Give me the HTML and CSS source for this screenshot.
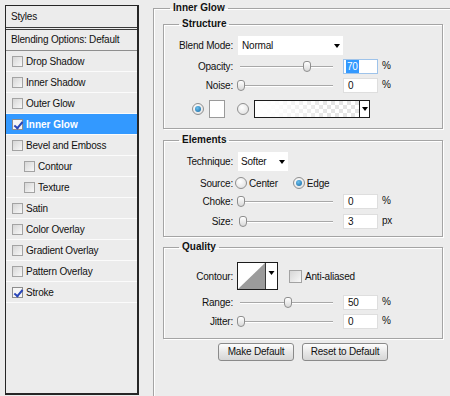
FILE: index.html
```html
<!DOCTYPE html>
<html lang="en">
<head>
<meta charset="utf-8">
<title>Layer Style - Inner Glow</title>
<link rel="stylesheet" href="styles.css">
</head>
<body>
<div class="app">
  <aside class="styles-panel">
    <div class="panel-head">Styles</div>
    <div class="blend-row">Blending Options: Default</div>
    <ul class="style-list">
      <li class="style-item"><span class="cb"></span>Drop Shadow</li>
      <li class="style-item"><span class="cb"></span>Inner Shadow</li>
      <li class="style-item"><span class="cb"></span>Outer Glow</li>
      <li class="style-item active"><span class="cb checked"></span>Inner Glow</li>
      <li class="style-item"><span class="cb"></span>Bevel and Emboss</li>
      <li class="style-item sub"><span class="cb"></span>Contour</li>
      <li class="style-item sub"><span class="cb"></span>Texture</li>
      <li class="style-item"><span class="cb"></span>Satin</li>
      <li class="style-item"><span class="cb"></span>Color Overlay</li>
      <li class="style-item"><span class="cb"></span>Gradient Overlay</li>
      <li class="style-item"><span class="cb"></span>Pattern Overlay</li>
      <li class="style-item"><span class="cb checked"></span>Stroke</li>
    </ul>
  </aside>

  <fieldset class="outer">
    <legend class="outer-legend">Inner Glow</legend>

    <fieldset class="group structure">
      <legend class="group-legend">Structure</legend>
      <div class="row row-select">
        <span class="label">Blend Mode:</span>
        <div class="select select-blend"><span>Normal</span><i class="arrow"></i></div>
      </div>
      <div class="row row-slider row-first">
        <span class="label">Opacity:</span>
        <div class="slider"><div class="range"><span class="thumb" style="left:70%"></span></div></div>
        <div class="num focused"><span class="sel">70</span></div>
        <span class="unit">%</span>
      </div>
      <div class="row row-slider">
        <span class="label">Noise:</span>
        <div class="slider"><div class="range"><span class="thumb" style="left:0%"></span></div></div>
        <div class="num">0</div>
        <span class="unit">%</span>
      </div>
      <div class="row row-color">
        <span class="radio on"></span>
        <span class="swatch"></span>
        <span class="radio radio-2"></span>
        <div class="gradient"><span class="grad-fill"></span><span class="grad-drop"><i class="arrow"></i></span></div>
      </div>
    </fieldset>

    <fieldset class="group elements">
      <legend class="group-legend">Elements</legend>
      <div class="row row-select">
        <span class="label">Technique:</span>
        <div class="select select-tech"><span>Softer</span><i class="arrow"></i></div>
      </div>
      <div class="row row-source">
        <span class="label">Source:</span>
        <span class="radio radio-src"></span><span class="opt">Center</span>
        <span class="radio radio-src radio-edge on"></span><span class="opt">Edge</span>
      </div>
      <div class="row row-slider row-choke">
        <span class="label">Choke:</span>
        <div class="slider"><div class="range"><span class="thumb" style="left:0%"></span></div></div>
        <div class="num">0</div>
        <span class="unit">%</span>
      </div>
      <div class="row row-slider row-size">
        <span class="label">Size:</span>
        <div class="slider"><div class="range"><span class="thumb" style="left:2%"></span></div></div>
        <div class="num">3</div>
        <span class="unit">px</span>
      </div>
    </fieldset>

    <fieldset class="group quality">
      <legend class="group-legend">Quality</legend>
      <div class="row row-contour">
        <span class="label">Contour:</span>
        <svg class="contour" width="41" height="28" viewBox="0 0 41 28" aria-hidden="true">
          <rect x="0.5" y="0.5" width="40" height="27" fill="#fff" stroke="#1c1c1c"/>
          <polygon points="1,27 28,1 28,27" fill="#9b9b9b"/>
          <line x1="28.5" y1="1" x2="28.5" y2="27" stroke="#3a3a3a"/>
          <polygon points="31.5,9 37.5,9 34.5,13" fill="#000"/>
        </svg>
        <span class="cb cb-aa"></span><span class="opt">Anti-aliased</span>
      </div>
      <div class="row row-slider row-range">
        <span class="label">Range:</span>
        <div class="slider"><div class="range"><span class="thumb" style="left:50%"></span></div></div>
        <div class="num">50</div>
        <span class="unit">%</span>
      </div>
      <div class="row row-slider">
        <span class="label">Jitter:</span>
        <div class="slider"><div class="range"><span class="thumb" style="left:0%"></span></div></div>
        <div class="num">0</div>
        <span class="unit">%</span>
      </div>
    </fieldset>

    <div class="buttons">
      <button class="btn btn-make" type="button">Make Default</button>
      <button class="btn btn-reset" type="button">Reset to Default</button>
    </div>
  </fieldset>
</div>
</body>
</html>
```

FILE: styles.css
```css
* { box-sizing: border-box; }

html, body {
  margin: 0;
  padding: 0;
  width: 450px;
  height: 396px;
  overflow: hidden;
  background: #ececec;
}

body {
  font-family: "Liberation Sans", Arial, sans-serif;
  font-size: 10px;
  letter-spacing: -0.2px;
  color: #111;
}

.app {
  display: flex;
  align-items: flex-start;
}

/* ---------- Left styles panel ---------- */
.styles-panel {
  width: 134px;
  height: 390px;
  margin: 5px 0 0 5px;
  border-style: solid;
  border-color: #262626;
  border-width: 1px 2px 2px 1px;
  background: #ececec;
  flex: none;
}

.panel-head {
  height: 24px;
  line-height: 21px;
  padding-left: 5px;
  border-bottom: 3px double #3a3a3a;
}

.blend-row {
  height: 21px;
  line-height: 20px;
  padding-left: 5px;
  border-bottom: 1px solid #8e8e8e;
}

.style-list {
  list-style: none;
  margin: 0;
  padding: 0;
}

.style-item {
  display: flex;
  align-items: center;
  height: 21px;
  padding-left: 6px;
  border-bottom: 1px solid #fbfbfb;
  white-space: nowrap;
}

.style-item.sub { padding-left: 18px; }

.style-item.active {
  background: #3399ff;
  color: #fff;
  font-weight: bold;
  letter-spacing: 0;
}

.cb {
  position: relative;
  display: inline-block;
  width: 11px;
  height: 11px;
  margin-right: 3px;
  border: 1px solid #a3a3a3;
  background: linear-gradient(135deg, #d6d6d6, #f8f8f8);
  flex: none;
}

.cb.checked {
  background: #f6f6f6;
  border-color: #8d8d8d;
}

.cb.checked::after {
  content: "";
  position: absolute;
  left: 3px;
  top: 0px;
  width: 3px;
  height: 7px;
  border: solid #2a46b8;
  border-width: 0 2px 2px 0;
  transform: rotate(40deg);
}

/* ---------- Right side fieldsets ---------- */
fieldset { min-width: 0; }

.outer {
  width: 297px;
  height: 394px;
  margin: 2px 0 0 14px;
  padding: 4px 0 0 9px;
  border: 1px solid #a4a4a4;
  border-right: none;
  border-bottom: none;
  box-shadow: inset 1px 1px 0 #fff;
  flex: none;
}

.outer-legend {
  margin-left: 7px;
  padding: 0 3px;
  font-weight: bold;
  line-height: 12px;
  letter-spacing: 0;
  color: #111;
}

.group {
  width: 280px;
  margin: 0;
  padding: 0;
  border: 1px solid #a4a4a4;
  box-shadow: inset 1px 1px 0 #fff, 1px 1px 0 #fff;
}

.group-legend {
  margin-left: 15px;
  padding: 0 3px;
  font-weight: bold;
  line-height: 12px;
  letter-spacing: 0;
  color: #111;
}

.structure { padding-bottom: 10px; }
.elements { margin-top: 5px; padding-bottom: 7px; }
.quality { margin-top: 4px; padding-bottom: 9px; }

.row {
  display: flex;
  align-items: center;
  white-space: nowrap;
}

.label {
  width: 69px;
  text-align: right;
  flex: none;
}

/* select boxes */
.row-select { height: 19px; margin-top: 6px; }

.select {
  display: flex;
  align-items: center;
  height: 19px;
  margin-left: 5px;
  padding-left: 4px;
  background: #fff;
}

.select-blend { width: 105px; }
.select-tech { width: 50px; padding-left: 3px; }

.select .arrow { margin-left: auto; margin-right: 3px; }

.arrow {
  display: block;
  width: 0;
  height: 0;
  border-left: 3.5px solid transparent;
  border-right: 3.5px solid transparent;
  border-top: 4px solid #000;
}

/* sliders */
.row-slider { height: 15px; margin-top: 4px; }
.row-size, .row-range { margin-top: 5px; }

.slider {
  position: relative;
  width: 102px;
  height: 15px;
  margin-left: 4px;
  flex: none;
}

.slider::before {
  content: "";
  position: absolute;
  left: 3px;
  right: 6px;
  top: 7px;
  height: 1px;
  background: #a8a8a8;
  box-shadow: 0 1px 0 #fff;
}

.range {
  position: absolute;
  left: 0;
  top: 0;
  width: 94px;
  height: 15px;
}

.thumb {
  position: absolute;
  top: 2px;
  width: 8px;
  height: 11px;
  border: 1px solid #8e8e8e;
  border-radius: 3px 3px 4px 4px;
  background: linear-gradient(#ffffff, #d9d9d9);
}

.num {
  width: 35px;
  height: 15px;
  margin-left: 4px;
  padding-left: 4px;
  line-height: 13px;
  border: 1px solid #dedede;
  background: #fff;
  flex: none;
}

.num.focused { border-color: #9ec3ea; padding-left: 2px; }

.sel {
  display: inline-block;
  padding: 0 1px;
  background: #3399ff;
  color: #fff;
}

.unit { margin-left: 4px; margin-top: -2px; }

/* color row */
.row-color { height: 18px; margin-top: 7px; padding-left: 28px; }

.radio {
  position: relative;
  display: inline-block;
  width: 12px;
  height: 12px;
  border: 1px solid #8f8f8f;
  border-radius: 50%;
  background: radial-gradient(circle at 40% 35%, #ffffff, #dcdcdc);
  flex: none;
}

.radio.on::after {
  content: "";
  position: absolute;
  left: 2px;
  top: 2px;
  width: 6px;
  height: 6px;
  border-radius: 50%;
  background: radial-gradient(circle at 40% 35%, #6cc0ee, #1466a0);
}

.swatch {
  width: 16px;
  height: 18px;
  margin-left: 5px;
  border: 1px solid #9a9a9a;
  background: #fff;
  flex: none;
}

.radio-2 { margin-left: 12px; }

.gradient {
  display: flex;
  width: 116px;
  height: 18px;
  margin-left: 5px;
  border: 1px solid #1c1c1c;
  background: #fff;
}

.grad-fill {
  flex: 1;
  background:
    linear-gradient(to right, #ffffff 0%, rgba(255,255,255,0.9) 20%, rgba(255,255,255,0) 70%),
    conic-gradient(#e4e4e4 25%, #ffffff 0 50%, #e4e4e4 0 75%, #ffffff 0) 0 0 / 8px 8px;
}

.grad-drop {
  display: flex;
  align-items: center;
  justify-content: center;
  width: 10px;
  border-left: 1px solid #1c1c1c;
  background: #fff;
}

/* source row */
.row-source { height: 14px; margin-top: 5px; }
.radio-src { margin-left: 2px; }
.radio-edge { margin-left: 15px; }
.opt { margin-left: 2px; }

.row-choke { margin-top: 4px; }

/* contour row */
.row-contour { height: 28px; margin-top: 9px; }
.contour { display: block; margin-left: 4px; flex: none; }

.cb-aa {
  width: 13px;
  height: 13px;
  margin-left: 11px;
  margin-right: 1px;
}

/* buttons */
.buttons {
  display: flex;
  justify-content: center;
  gap: 8px;
  width: 280px;
  margin-top: 4px;
}

.btn {
  height: 18px;
  padding: 0;
  border: 1px solid #8a8a8a;
  border-radius: 3px;
  background: linear-gradient(#fdfdfd, #e6e6e6 55%, #d6d6d6);
  font-family: "Liberation Sans", Arial, sans-serif;
  font-size: 10px;
  letter-spacing: -0.2px;
  color: #111;
  line-height: 16px;
}

.btn-make { width: 76px; }
.btn-reset { width: 86px; }
```
